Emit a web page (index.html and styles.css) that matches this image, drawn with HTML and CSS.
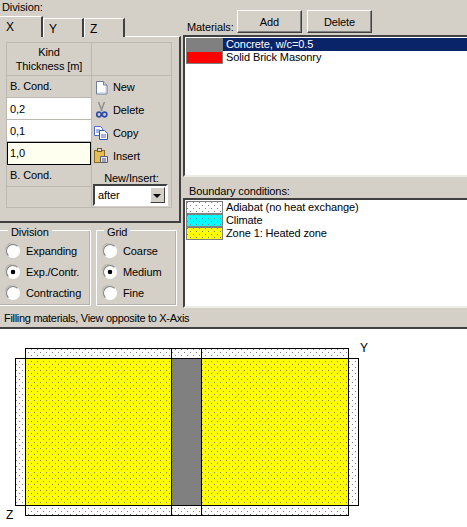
FILE: index.html
```html
<!DOCTYPE html>
<html lang="en">
<head>
  <meta charset="UTF-8" />
  <title>Filling materials</title>
  <link rel="stylesheet" href="styles.css">
</head>
<body>
  <div class="top">
    <div class="left">
      <div class="caption">Division:</div>
      <div class="tabs">
        <div class="tab active">X</div>
        <div class="tab">Y</div>
        <div class="tab">Z</div>
      </div>
      <div class="tab-panel">
        <div class="sheet">
          <div class="layers">
            <div class="cell head">Kind<br>Thickness [m]</div>
            <div class="cell cond">B. Cond.</div>
            <div class="cell value">0,2</div>
            <div class="cell value">0,1</div>
            <div class="cell value current">1,0</div>
            <div class="cell cond">B. Cond.</div>
            <div class="cell empty"></div>
          </div>
          <div class="actions">
            <div class="action-head"></div>
            <div class="action">
              <svg width="16" height="18" viewBox="0 0 16 18">
                <path d="M.5 3.5h7l3.5 3.5v9H.5z" fill="#fff" stroke="#6d7c9c"/>
                <path d="M7.5 3.5V7H11" fill="#cfdaee" stroke="#6d7c9c"/>
                <path d="M2 15h8V8" fill="none" stroke="#bcc8df"/>
              </svg>
              <span>New</span>
            </div>
            <div class="action">
              <svg width="16" height="18" viewBox="0 0 16 18">
                <path d="M2.5 1l3.5 9M8.5 1L5 10" fill="none" stroke="#8d8d8d" stroke-width="1.4"/>
                <circle cx="3" cy="13.5" r="2.3" fill="none" stroke="#2d4fa8" stroke-width="1.7"/>
                <circle cx="8.5" cy="13.5" r="2.3" fill="none" stroke="#2d4fa8" stroke-width="1.7"/>
              </svg>
              <span>Delete</span>
            </div>
            <div class="action">
              <svg width="16" height="18" viewBox="0 0 16 18" class="shift">
                <path d="M.5 2.5h6l2 2v7h-8z" fill="#fff" stroke="#4a6fc0"/>
                <path d="M5.5 6.5h5l3 3v6h-8z" fill="#fff" stroke="#2d55b0"/>
                <path d="M2 6h4M2 8h3M7 11h5M7 13h5" stroke="#4a6fc0"/>
              </svg>
              <span>Copy</span>
            </div>
            <div class="action">
              <svg width="16" height="18" viewBox="0 0 16 18" class="shift">
                <rect x=".5" y="3.5" width="10" height="12" fill="#e6bc55" stroke="#8a6a20"/>
                <rect x="3.5" y="1.5" width="4" height="3" fill="#d8d8d8" stroke="#6a5a30"/>
                <path d="M6.5 9.5h7v6h-7z" fill="#e8e8f0" stroke="#555c78"/>
                <path d="M8 12h4M8 14h4" stroke="#555c78"/>
              </svg>
              <span>Insert</span>
            </div>
            <div class="mode-label">New/Insert:</div>
            <div class="combo">
              <span class="combo-text">after</span>
              <span class="combo-button"></span>
            </div>
          </div>
        </div>
      </div>
      <div class="groups">
        <div class="group division">
          <div class="group-title">Division</div>
          <div class="radio">Expanding</div>
          <div class="radio on">Exp./Contr.</div>
          <div class="radio">Contracting</div>
        </div>
        <div class="group grid">
          <div class="group-title">Grid</div>
          <div class="radio">Coarse</div>
          <div class="radio on">Medium</div>
          <div class="radio">Fine</div>
        </div>
      </div>
    </div>

    <div class="right">
      <div class="materials-bar">
        <span class="materials-label">Materials:</span>
        <button class="btn">Add</button>
        <button class="btn">Delete</button>
      </div>
      <div class="list materials">
        <div class="row selected">
          <svg class="swatch"><rect width="37" height="13" fill="#808080"/></svg>
          <span>Concrete, w/c=0.5</span>
        </div>
        <div class="row">
          <svg class="swatch"><rect width="37" height="13" fill="#ff0000"/></svg>
          <span>Solid Brick Masonry</span>
        </div>
      </div>
      <div class="boundary-label">Boundary conditions:</div>
      <div class="list boundary">
        <div class="row">
          <svg class="swatch"><rect width="37" height="13" fill="url(#dots-white)"/></svg>
          <span>Adiabat (no heat exchange)</span>
        </div>
        <div class="row">
          <svg class="swatch"><rect width="37" height="13" fill="url(#dots-cyan)"/></svg>
          <span>Climate</span>
        </div>
        <div class="row">
          <svg class="swatch"><rect width="37" height="13" fill="url(#dots-yellow)"/></svg>
          <span>Zone 1: Heated zone</span>
        </div>
      </div>
    </div>
  </div>

  <div class="status">Filling materials, View opposite to X-Axis</div>

  <svg class="diagram" width="467" height="198" viewBox="0 329 467 198" shape-rendering="crispEdges">
    <defs>
      <pattern id="dots-white" width="6" height="6" patternUnits="userSpaceOnUse">
        <rect width="6" height="6" fill="#fff"/>
        <rect x="1" y="1" width="1" height="1" fill="#808080"/>
        <rect x="4" y="4" width="1" height="1" fill="#808080"/>
      </pattern>
      <pattern id="dots-cyan" width="6" height="6" patternUnits="userSpaceOnUse">
        <rect width="6" height="6" fill="#00ffff"/>
        <rect x="1" y="1" width="1" height="1" fill="#808080"/>
        <rect x="4" y="4" width="1" height="1" fill="#808080"/>
      </pattern>
      <pattern id="dots-yellow" width="6" height="6" patternUnits="userSpaceOnUse">
        <rect width="6" height="6" fill="#ffff00"/>
        <rect x="1" y="1" width="1" height="1" fill="#808080"/>
        <rect x="4" y="4" width="1" height="1" fill="#808080"/>
      </pattern>
    </defs>
    <g stroke="#000">
      <rect x="25.5" y="348.5" width="146" height="10" fill="url(#dots-white)"/>
      <rect x="171.5" y="348.5" width="30" height="10" fill="url(#dots-white)"/>
      <rect x="201.5" y="348.5" width="147" height="10" fill="url(#dots-white)"/>
      <rect x="15.5" y="358.5" width="10" height="147" fill="url(#dots-white)"/>
      <rect x="348.5" y="358.5" width="10" height="147" fill="url(#dots-white)"/>
      <rect x="25.5" y="358.5" width="146" height="147" fill="url(#dots-yellow)"/>
      <rect x="171.5" y="358.5" width="30" height="147" fill="#808080"/>
      <rect x="201.5" y="358.5" width="147" height="147" fill="url(#dots-yellow)"/>
      <rect x="25.5" y="505.5" width="146" height="10" fill="url(#dots-white)"/>
      <rect x="171.5" y="505.5" width="30" height="10" fill="url(#dots-white)"/>
      <rect x="201.5" y="505.5" width="147" height="10" fill="url(#dots-white)"/>
    </g>
    <text x="360" y="352" class="axis">Y</text>
    <text x="6" y="519" class="axis">Z</text>
  </svg>
</body>
</html>
```

FILE: styles.css
```css
* { box-sizing: border-box; margin: 0; padding: 0; }
html, body { width: 467px; height: 527px; overflow: hidden; }
body { font-family: 'Liberation Sans', Arial, sans-serif; font-size: 11px; letter-spacing: -0.1px; line-height: 14px; background: #d4d0c8; color: #000; }

.top { display: flex; height: 307px; }
.left { width: 182px; flex: none; }
.right { flex: 1; min-width: 0; }

.caption { height: 17px; padding: 0 0 0 2px; }

.tabs { display: flex; height: 19px; }
.tab { width: 41px; height: 19px; margin-top: 1px; padding: 3px 0 0 5px; font-size: 12px; background: #d4d0c8; border-top: 1px solid #fff; border-left: 1px solid #fff; border-right: 2px solid #404040; }
.tab.active { width: 43px; height: 21px; margin-top: -1px; padding: 3px 0 0 6px; position: relative; z-index: 1; border-left: 0; }

.tab-panel { width: 181px; height: 187px; padding: 5px 7px 15px 6px; border-top: 1px solid #fff; border-right: 2px solid #404040; border-bottom: 2px solid #404040; }

.sheet { display: flex; height: 166px; border: 1px solid #bcb9b2; }
.layers { width: 85px; flex: none; border-right: 1px solid #bcb9b2; }
.cell { height: 22px; padding: 4px 3px 0; border-bottom: 1px solid #bcb9b2; }
.cell.head { height: 33px; padding: 2px 0 0; text-align: center; }
.cell.cond { padding-top: 3px; }
.cell.value { background: #fff; padding-top: 4px; }
.cell.current { height: 23px; background: #fffff0; border: 1px solid #000; padding: 3px 2px 0; }
.cell.empty { height: 21px; border-bottom: 0; }

.actions { flex: 1; min-width: 0; }
.action-head { height: 33px; margin-bottom: -1px; border-bottom: 1px solid #bcb9b2; }
.action { display: flex; align-items: center; height: 23px; padding-left: 4px; gap: 1px; }
.action svg { flex: none; }
.action .shift { margin-left: -2px; margin-right: 2px; }
.mode-label { margin-top: 4px; text-align: center; }
.combo { display: flex; width: 75px; height: 22px; margin: -1px 0 0 1px; background: #fff; border: 2px solid; border-color: #404040 #fff #fff #404040; padding: 1px; }
.combo-text { flex: 1; padding: 1px 0 0 2px; }
.combo-button { width: 15px; flex: none; background: #d4d0c8; border: 1px solid; border-color: #fff #404040 #404040 #fff; position: relative; }
.combo-button::after { content: ""; position: absolute; left: 2px; top: 6px; border: 4px solid transparent; border-top-color: #000; border-bottom: 0; }

.groups { display: flex; gap: 5px; margin-top: 7px; margin-left: -1px; }
.group { position: relative; height: 76px; border: 1px solid #fff; box-shadow: -1px -1px 0 #b5b2ab inset; padding: 11px 0 0 6px; }
.group.division { width: 92px; }
.group.grid { width: 81px; }
.group-title { position: absolute; left: 8px; top: -6px; padding: 0 3px; background: #d4d0c8; }
.group.grid .group-title { left: 7px; }
.radio { position: relative; height: 21px; padding: 2px 0 0 20px; }
.radio::before { content: ""; position: absolute; left: 0; top: 2px; width: 12px; height: 12px; border-radius: 50%; background: #fff; border: 1px solid; border-color: #808080 #fff #fff #808080; box-shadow: 0 0 0 1px #d4d0c8, -1px -1px 0 0 #8a8883; }
.radio.on::before { background: radial-gradient(circle, #000 0, #000 2px, #fff 2.6px); }

.materials-bar { position: relative; display: flex; align-items: flex-start; height: 35px; padding: 10px 0 0 55px; gap: 5px; }
.materials-label { position: absolute; left: 5px; top: 20px; }
.btn { width: 65px; height: 23px; font: inherit; letter-spacing: inherit; background: #d4d0c8; border: 1px solid; border-color: #fff #404040 #404040 #fff; box-shadow: inset -1px -1px 0 #808080; }

.list { background: #fff; border-left: 2px solid #404040; border-top: 2px solid #404040; border-bottom: 2px solid #eeece7; padding: 1px 0 0 1px; margin-left: 1px; }
.list.materials { height: 142px; }
.list.boundary { height: 110px; }
.row { display: flex; height: 13px; line-height: 13px; gap: 3px; white-space: nowrap; }
.row.selected { background: #0a246a; color: #fff; }
.swatch { display: block; width: 37px; height: 13px; flex: none; outline: 1px solid #808080; outline-offset: -1px; }

.boundary-label { height: 21px; padding: 7px 0 0 7px; }

.status { height: 22px; padding: 4px 0 0 4px; letter-spacing: -0.3px; border-bottom: 2px solid #404040; }

.diagram { display: block; background: #fff; }
.axis { font-family: 'Liberation Sans', sans-serif; font-size: 12px; }
```
